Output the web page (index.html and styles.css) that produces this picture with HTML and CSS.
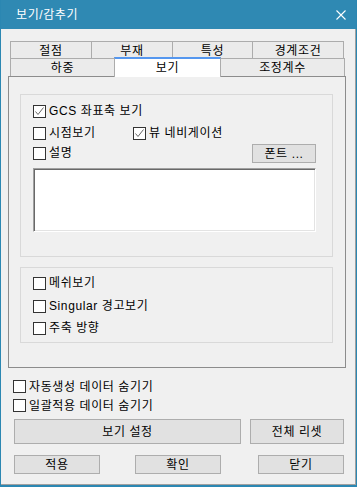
FILE: index.html
```html
<!DOCTYPE html>
<html lang="ko">
<head>
<meta charset="utf-8">
<title>보기/감추기</title>
<link rel="stylesheet" href="styles.css">
</head>
<body>
<div class="window">
  <div class="titlebar">
    <span class="title">보기/감추기</span>
    <svg class="close" width="10" height="10" viewBox="0 0 10 10"><path d="M0.5 0.5 L9.5 9.5 M9.5 0.5 L0.5 9.5" stroke="#fff" stroke-width="1.1" fill="none"/></svg>
  </div>
  <div class="client">
    <div class="tabctl">
      <div class="tabrow row1">
        <div class="tab w82">절점</div>
        <div class="tab w82">부재</div>
        <div class="tab w81">특성</div>
        <div class="tab w92 last">경계조건</div>
      </div>
      <div class="tabrow row2">
        <div class="tab w105">하중</div>
        <div class="tab sel w107">보기</div>
        <div class="tab w125 last">조정계수</div>
      </div>
      <div class="panel">
        <div class="group g1">
          <div class="row r1"><label class="chk"><span class="cb"><svg width="11" height="11" viewBox="0 0 11 11"><path d="M1.5 5.5 L4 8.5 L9.5 1.5" stroke="#666" stroke-width="1" fill="none"/></svg></span><span>GCS 좌표축 보기</span></label></div>
          <div class="row r2"><label class="chk first"><span class="cb"></span><span>시점보기</span></label><label class="chk"><span class="cb"><svg width="11" height="11" viewBox="0 0 11 11"><path d="M1.5 5.5 L4 8.5 L9.5 1.5" stroke="#666" stroke-width="1" fill="none"/></svg></span><span>뷰 네비게이션</span></label></div>
          <div class="row r3"><label class="chk"><span class="cb"></span><span>설명</span></label><button class="btn font">폰트 ...</button></div>
          <div class="memo"></div>
        </div>
        <div class="group g2">
          <div class="row"><label class="chk"><span class="cb"></span><span>메쉬보기</span></label></div>
          <div class="row gap3"><label class="chk"><span class="cb"></span><span>Singular 경고보기</span></label></div>
          <div class="row gap2"><label class="chk"><span class="cb"></span><span>주축 방향</span></label></div>
        </div>
      </div>
    </div>
    <div class="outer-checks">
      <div class="orow"><label class="chk"><span class="cb"></span><span>자동생성 데이터 숨기기</span></label></div>
      <div class="orow"><label class="chk"><span class="cb"></span><span>일괄적용 데이터 숨기기</span></label></div>
    </div>
    <div class="btnrow b1">
      <button class="btn view">보기 설정</button>
      <button class="btn reset">전체 리셋</button>
    </div>
    <div class="btnrow b2">
      <button class="btn small">적용</button>
      <button class="btn small ok">확인</button>
      <button class="btn small close-btn">닫기</button>
    </div>
  </div>
</div>
</body>
</html>
```

FILE: styles.css
```css
* { box-sizing: border-box; }
html, body { margin: 0; padding: 0; }
body {
  width: 357px;
  height: 487px;
  overflow: hidden;
  font-family: "Liberation Sans", "Noto Sans CJK KR", sans-serif;
  font-size: 12px;
  line-height: 14px;
  letter-spacing: 0.6px;
  color: #000;
  background: #f0f0f0;
}
.window {
  width: 357px;
  height: 487px;
  display: flex;
  flex-direction: column;
  border-left: 1px solid #2b87b2;
  border-right: 1px solid #2b87b2;
  border-bottom: 2px solid #2b87b2;
}
.titlebar {
  height: 29px;
  flex: none;
  background: #2f89b3;
  display: flex;
  align-items: center;
  padding-left: 15px;
  padding-right: 10px;
  color: #fff;
}
.title { flex: 1; padding-top: 1px; }
.close { display: block; margin-top: 1px; }
.client {
  flex: 1;
  background: #f0f0f0;
  border-right: 1px solid #a0a0a0;
  border-bottom: 1px solid #a0a0a0;
}
.tabctl { margin: 12px 0 0 7px; width: 338px; }
.tabrow { display: flex; padding-left: 2px; align-items: flex-start; }
.row1 { height: 17px; }
.row2 { height: 18px; }
.tab {
  border: 1px solid #acacac;
  border-bottom: none;
  background: #ebebeb;
  margin-right: -1px;
  display: flex;
  align-items: center;
  justify-content: center;
  height: 100%;
  padding-top: 1px;
}
.tab.last { margin-right: 0; }
.w82 { width: 82px; }
.w81 { width: 81px; }
.w92 { width: 92px; }
.w105 { width: 105px; }
.w107 { width: 107px; }
.w125 { width: 125px; }
.tab.sel {
  position: relative;
  z-index: 1;
  background: #fff;
  border-top: 2px solid #5597ef;
  margin-top: -1px;
  height: 20px;
  padding-top: 0;
}
.panel {
  border: 1px solid #8c8c8c;
  height: 292px;
  width: 338px;
  padding-left: 11px;
  padding-top: 17px;
}
.group {
  border: 1px solid #d9d9d9;
  width: 313px;
}
.g1 { height: 163px; padding: 6px 16px 0 12px; }
.g2 { height: 76px; margin-top: 10px; padding: 5px 0 0 12px; }
.row { display: flex; align-items: center; height: 20px; }
.r2 { margin-top: 2px; }
.r3 { justify-content: space-between; }
.gap3 { margin-top: 3px; }
.gap2 { margin-top: 2px; }
.chk { display: flex; align-items: center; gap: 3px; white-space: nowrap; }
.chk.first { width: 100px; }
.cb {
  width: 13px;
  height: 13px;
  border: 1px solid #333;
  background: #fff;
  display: flex;
  align-items: center;
  justify-content: center;
  flex: none;
}
.cb svg { display: block; }
.btn {
  font-family: inherit;
  font-size: 12px;
  line-height: 14px;
  letter-spacing: 0.6px;
  color: #000;
  background: #e1e1e1;
  border: 1px solid #adadad;
  padding: 0;
  margin: 0;
  display: flex;
  align-items: center;
  justify-content: center;
}
.btn.font { width: 64px; height: 19px; align-self: flex-end; }
.memo {
  margin-top: 5px;
  width: 283px;
  height: 64px;
  background: #fff;
  border-top: 1px solid #a0a0a0;
  border-left: 1px solid #a0a0a0;
  border-right: 1px solid #fff;
  border-bottom: 1px solid #fff;
  box-shadow: inset 1px 1px 0 #696969, inset -1px -1px 0 #e3e3e3;
}
.outer-checks { margin: 9px 0 0 12px; }
.orow { height: 19px; display: flex; align-items: center; }
.btnrow { display: flex; margin-left: 13px; }
.b1 { margin-top: 4px; gap: 9px; }
.btn.view { width: 227px; height: 25px; }
.btn.reset { width: 94px; height: 25px; }
.b2 { margin-top: 11px; }
.btn.small { width: 86px; height: 19px; }
.btn.ok { margin-left: 35px; }
.btn.close-btn { margin-left: 37px; }
```
